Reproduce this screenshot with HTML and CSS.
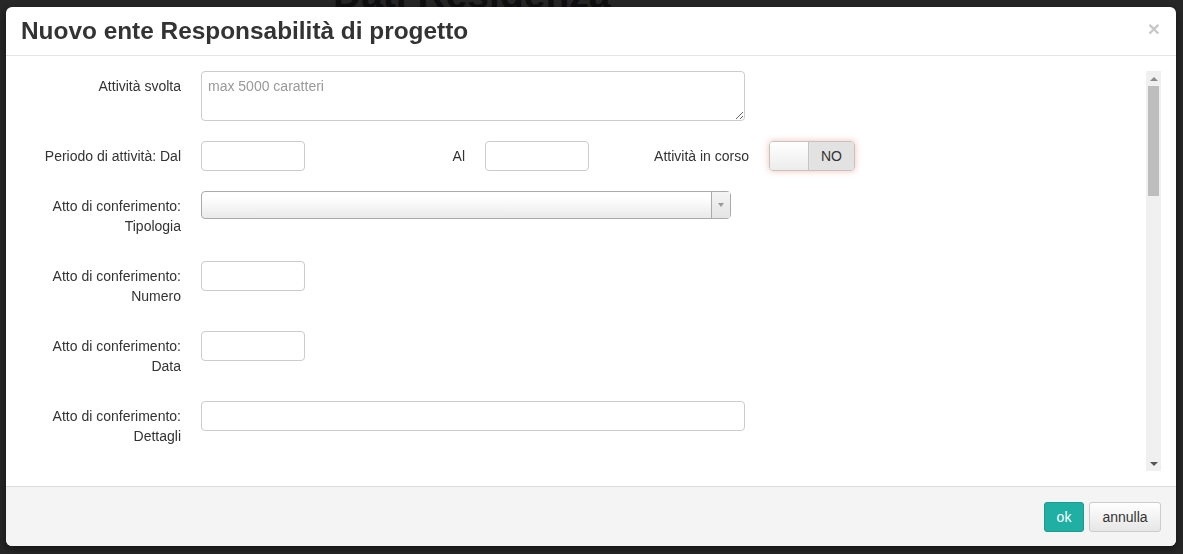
FILE: index.html
```html
<!DOCTYPE html>
<html lang="it">
<head>
    <meta charset="UTF-8">
    <title>Nuovo ente Responsabilità di progetto</title>
    <link rel="stylesheet" href="styles.css">
</head>
<body>
    <!-- pagina sotto il backdrop -->
    <div class="page">
        <h2 class="page-title">Dati Residenza</h2>
    </div>
    <div class="backdrop"></div>

    <!-- Modal -->
    <div class="modal">
        <div class="modal-header">
            <h3 class="modal-title">Nuovo ente Responsabilità di progetto</h3>
            <span class="close">&times;</span>
        </div>

        <div class="modal-body">
            <div class="scroll-area">
                <form class="form">
                    <div class="row">
                        <label class="lbl">Attività svolta</label>
                        <textarea class="ctrl textarea" placeholder="max 5000 caratteri"></textarea>
                    </div>

                    <div class="row">
                        <label class="lbl">Periodo di attività: Dal</label>
                        <input type="text" class="ctrl short">
                        <label class="lbl lbl-inline">Al</label>
                        <input type="text" class="ctrl short">
                        <label class="lbl lbl-inline">Attività in corso</label>
                        <div class="switch">
                            <span class="switch-off"></span>
                            <span class="switch-label">NO</span>
                        </div>
                    </div>

                    <div class="row">
                        <label class="lbl">Atto di conferimento:<br>Tipologia</label>
                        <div class="select">
                            <span class="select-text"></span>
                            <span class="select-arrow"><b></b></span>
                        </div>
                    </div>

                    <div class="row">
                        <label class="lbl">Atto di conferimento:<br>Numero</label>
                        <input type="text" class="ctrl short">
                    </div>

                    <div class="row">
                        <label class="lbl">Atto di conferimento:<br>Data</label>
                        <input type="text" class="ctrl short">
                    </div>

                    <div class="row">
                        <label class="lbl">Atto di conferimento:<br>Dettagli</label>
                        <input type="text" class="ctrl wide">
                    </div>
                </form>

                <div class="scrollbar">
                    <span class="sb-up"></span>
                    <span class="sb-thumb"></span>
                    <span class="sb-space"></span>
                    <span class="sb-down"></span>
                </div>
            </div>
        </div>

        <div class="modal-footer">
            <button class="btn btn-ok">ok</button>
            <button class="btn btn-default">annulla</button>
        </div>
    </div>
</body>
</html>
```

FILE: styles.css
```css
/* General */
body {
    margin: 0;
    font-family: 'Liberation Sans', Arial, sans-serif;
    font-size: 14px;
    color: #333;
    background: #2b2b2b;
    height: 554px;
    overflow: hidden;
}

.page {
    padding-left: 333px;
}

.page-title {
    margin: -27px 0 0;
    font-size: 39px;
    font-weight: bold;
    color: #111;
}

.backdrop {
    position: fixed;
    inset: 0;
    background: rgba(0, 0, 0, 0.1);
}

/* Modal */
.modal {
    position: fixed;
    left: 6px;
    top: 7px;
    width: 1170px;
    height: 539px;
    background: #fff;
    border-radius: 6px;
    box-shadow: 0 3px 9px rgba(0, 0, 0, 0.5);
    display: flex;
    flex-direction: column;
    overflow: hidden;
}

.modal-header {
    height: 48px;
    border-bottom: 1px solid #e5e5e5;
    display: flex;
    align-items: center;
    justify-content: space-between;
    padding: 0 15px;
}

.modal-title {
    margin: 0;
    font-size: 24.4px;
    font-weight: bold;
    color: #333;
}

.close {
    font-size: 21px;
    font-weight: bold;
    color: #c8c8c8;
    margin-right: 1px;
    margin-top: -4px;
}

.modal-body {
    flex: 1;
    padding: 15px;
}

.scroll-area {
    display: flex;
    height: 400px;
    overflow: hidden;
}

.form {
    flex: 1;
}

.row {
    display: flex;
    align-items: flex-start;
    gap: 20px;
    margin-bottom: 20px;
}

.lbl {
    width: 160px;
    flex: none;
    text-align: right;
    line-height: 20px;
    padding: 5px 0;
    color: #333;
}

.lbl-inline {
    width: 140px;
}

.ctrl {
    box-sizing: border-box;
    height: 30px;
    border: 1px solid #ccc;
    border-radius: 4px;
    font-family: inherit;
    font-size: 14px;
    padding: 5px 6px;
    background: #fff;
    margin: 0;
}

.textarea {
    width: 544px;
    height: 50px;
    resize: vertical;
    padding: 6px 6px;
}

.textarea::placeholder {
    color: #999;
}

.short {
    width: 104px;
}

.wide {
    width: 544px;
}

/* switch */
.switch {
    display: flex;
    width: 86px;
    height: 30px;
    box-sizing: border-box;
    border: 1px solid #c4c4c4;
    border-radius: 4px;
    overflow: hidden;
    box-shadow: 0 0 6px rgba(230, 110, 90, 0.45);
}

.switch-off {
    width: 38px;
    background: linear-gradient(#fff, #ececec);
    border-right: 1px solid #c4c4c4;
}

.switch-label {
    flex: 1;
    background: #e2e2e2;
    text-align: center;
    line-height: 28px;
    color: #333;
}

/* select */
.select {
    display: flex;
    width: 530px;
    height: 28px;
    box-sizing: border-box;
    border: 1px solid #aaa;
    border-radius: 4px;
    background: linear-gradient(#fff 20%, #eaeaea);
}

.select-text {
    flex: 1;
}

.select-arrow {
    width: 18px;
    border-left: 1px solid #aaa;
    background: linear-gradient(#f4f4f4, #e4e4e4);
    display: flex;
    align-items: center;
    justify-content: center;
}

.select-arrow b {
    width: 0;
    height: 0;
    border-left: 3px solid transparent;
    border-right: 3px solid transparent;
    border-top: 4px solid #999;
}

/* finta scrollbar */
.scrollbar {
    width: 15px;
    flex: none;
    background: #f0f0f0;
    display: flex;
    flex-direction: column;
    align-items: center;
}

.sb-up, .sb-down {
    height: 15px;
    width: 100%;
    display: flex;
    align-items: center;
    justify-content: center;
}

.sb-up::after, .sb-down::after {
    content: '';
    border-left: 4px solid transparent;
    border-right: 4px solid transparent;
}

.sb-up::after {
    border-bottom: 4px solid #8a8a8a;
}

.sb-down::after {
    border-top: 4px solid #555;
}

.sb-thumb {
    width: 11px;
    height: 110px;
    background: #bebebe;
}

.sb-space {
    flex: 1;
}

/* footer */
.modal-footer {
    height: 59px;
    border-top: 1px solid #ddd;
    background: #f4f4f4;
    display: flex;
    justify-content: flex-end;
    align-items: center;
    gap: 5px;
    padding: 0 15px;
}

.btn {
    height: 30px;
    font-family: inherit;
    font-size: 14px;
    border-radius: 3px;
    cursor: pointer;
}

.btn-ok {
    width: 40px;
    padding: 0;
    background: #1fb0a3;
    border: 1px solid #1a9c90;
    color: #fff;
}

.btn-default {
    width: 72px;
    padding: 0;
    background: linear-gradient(#fff, #e6e6e6);
    border: 1px solid #ccc;
    color: #333;
}
```
